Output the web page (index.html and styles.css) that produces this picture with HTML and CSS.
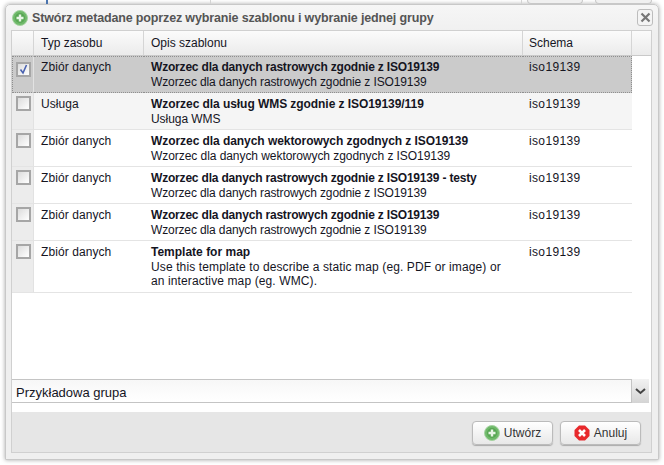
FILE: index.html
```html
<!DOCTYPE html>
<html lang="pl">
<head>
  <meta charset="UTF-8">
  <title>Stwórz metadane</title>
  <link rel="stylesheet" href="styles.css">
</head>
<body>
  <div class="top-strip">
    <span class="strip-line blue"></span>
    <span class="strip-line gray"></span>
    <span class="strip-line gray last"></span>
    <span class="strip-tab"></span>
    <span class="strip-tab"></span>
  </div>
  <div class="window">
    <div class="window-title">
      <svg class="icon-add" width="16" height="16" viewBox="0 0 16 16">
        <circle cx="8" cy="8" r="7.5" fill="#6fb96a" stroke="#a5d3a0"/>
        <circle cx="8" cy="8" r="5" fill="#58a653"/>
        <path d="M8 4.500v7M4.500 8h7" stroke="#e8f5e6" stroke-width="2.400"/>
      </svg>
      <span class="title-text">Stwórz metadane poprzez wybranie szablonu i wybranie jednej grupy</span>
      <button class="close-btn" type="button">
        <svg width="11" height="11" viewBox="0 0 11 11">
          <path d="M1.500 1.500l8 8M9.500 1.500l-8 8" stroke="#777" stroke-width="2.200"/>
        </svg>
      </button>
    </div>
    <div class="window-body">
      <div class="grid-area">
        <table class="grid">
          <colgroup>
            <col class="col-check">
            <col class="col-type">
            <col class="col-desc">
            <col class="col-schema">
            <col class="col-end">
          </colgroup>
          <thead>
            <tr>
              <th></th>
              <th>Typ zasobu</th>
              <th>Opis szablonu</th>
              <th class="schema-head">Schema</th>
              <th class="end-head"></th>
            </tr>
          </thead>
          <tbody>
            <tr class="selected">
              <td class="check-cell"><span class="check"><svg width="11" height="11" viewBox="0 0 11 11"><path d="M2.500 5.500l2.500 3.500l3.500-8" fill="none" stroke="#4a62b0" stroke-width="1.600"/></svg></span></td>
              <td class="type">Zbiór danych</td>
              <td class="raster"><b>Wzorzec dla danych rastrowych zgodnie z ISO19139</b><br>Wzorzec dla danych rastrowych zgodnie z ISO19139</td>
              <td class="schema">iso19139</td>
            </tr>
            <tr class="alt">
              <td class="check-cell"><span class="check"></span></td>
              <td class="type">Usługa</td>
              <td class="vector"><b>Wzorzec dla usług WMS zgodnie z ISO19139/119</b><br>Usługa WMS</td>
              <td class="schema">iso19139</td>
            </tr>
            <tr>
              <td class="check-cell"><span class="check"></span></td>
              <td class="type">Zbiór danych</td>
              <td class="vector"><b>Wzorzec dla danych wektorowych zgodnych z ISO19139</b><br>Wzorzec dla danych wektorowych zgodnych z ISO19139</td>
              <td class="schema">iso19139</td>
            </tr>
            <tr>
              <td class="check-cell"><span class="check"></span></td>
              <td class="type">Zbiór danych</td>
              <td class="raster"><b>Wzorzec dla danych rastrowych zgodnie z ISO19139 - testy</b><br>Wzorzec dla danych rastrowych zgodnie z ISO19139</td>
              <td class="schema">iso19139</td>
            </tr>
            <tr>
              <td class="check-cell"><span class="check"></span></td>
              <td class="type">Zbiór danych</td>
              <td class="raster"><b>Wzorzec dla danych rastrowych zgodnie z ISO19139</b><br>Wzorzec dla danych rastrowych zgodnie z ISO19139</td>
              <td class="schema">iso19139</td>
            </tr>
            <tr class="tall">
              <td class="check-cell"><span class="check"></span></td>
              <td class="type">Zbiór danych</td>
              <td class="wide"><b>Template for map</b><br>Use this template to describe a static map (eg. PDF or image) or<br>an interactive map (eg. WMC).</td>
              <td class="schema">iso19139</td>
            </tr>
          </tbody>
        </table>
      </div>
      <div class="combo">
        <span class="combo-text">Przykładowa grupa</span>
        <span class="combo-arrow">
          <svg width="11" height="7" viewBox="0 0 11 7"><path d="M1 1l4.500 4l4.500-4" fill="none" stroke="#444" stroke-width="2"/></svg>
        </span>
      </div>
      <div class="footer">
        <button class="btn" type="button">
          <svg width="16" height="16" viewBox="0 0 16 16">
            <circle cx="8" cy="8" r="7.500" fill="#6fb96a" stroke="#a5d3a0"/>
            <circle cx="8" cy="8" r="5" fill="#58a653"/>
            <path d="M8 4.500v7M4.500 8h7" stroke="#e8f5e6" stroke-width="2.400"/>
          </svg>
          Utwórz
        </button>
        <button class="btn" type="button">
          <svg width="16" height="16" viewBox="0 0 16 16">
            <path d="M5 .5h6l4.500 4.500v6l-4.500 4.500h-6l-4.500-4.500v-6z" fill="#e8292c"/>
            <path d="M5 5l6 6M11 5l-6 6" stroke="#fff" stroke-width="2.600"/>
          </svg>
          Anuluj
        </button>
      </div>
    </div>
  </div>
</body>
</html>
```

FILE: styles.css
```css
html, body {
  margin: 0;
  padding: 0;
}
body {
  width: 664px;
  height: 465px;
  overflow: hidden;
  background-color: #fff;
  font-family: "Liberation Sans", Arial, sans-serif;
  font-size: 12px;
  color: #15151f;
}
.top-strip {
  display: flex;
  height: 4px;
  padding-left: 46px;
}
.strip-line {
  width: 1px;
  margin-right: 162px;
}
.strip-line.blue {
  width: 2px;
  background-color: #4a74ae;
}
.strip-line.gray {
  background-color: #d4d4d4;
}
.strip-line.last {
  margin-right: 5px;
}
.strip-line.gray + .strip-line.last {
  margin-left: 148px;
}
.strip-tab {
  width: 63px;
  margin-right: 12px;
  box-sizing: border-box;
  border: 1px solid #c8c8c8;
  border-top: none;
  border-radius: 0 0 4px 4px;
  background-color: #f0f0f0;
}
.window {
  width: 654px;
  height: 456px;
  margin-left: 5px;
  box-sizing: border-box;
  border: 1px solid #c8c8c8;
  border-radius: 5px 5px 0 0;
  background: linear-gradient(#f6f6f6, #efefef 30px);
  box-shadow: 0 0 4px rgba(0, 0, 0, 0.35);
  padding: 0 6px 6px 5px;
  display: flex;
  flex-direction: column;
}
.window-title {
  height: 25px;
  padding-left: 1px;
  display: flex;
  align-items: center;
  gap: 4px;
  font-weight: bold;
  font-size: 12.500px;
  letter-spacing: -0.15px;
  color: #555;
}
.title-text {
  flex: 1;
}
.close-btn {
  width: 16px;
  height: 17px;
  margin-right: -1px;
  padding: 0;
  display: flex;
  align-items: center;
  justify-content: center;
  border: 1px solid #bdbdbd;
  border-radius: 3px;
  background-color: #f4f4f4;
}
.window-body {
  flex: 1;
  background-color: #fff;
  border: 1px solid #d0d0d0;
  display: flex;
  flex-direction: column;
}
.grid-area {
  height: 348px;
}
.grid {
  width: 639px;
  border-collapse: separate;
  border-spacing: 0;
  table-layout: fixed;
}
.col-check { width: 22px; }
.col-type { width: 110px; }
.col-desc { width: 379px; }
.col-schema { width: 109px; }
.col-end { width: 19px; }
.grid th {
  height: 25px;
  padding: 0 7px;
  box-sizing: border-box;
  text-align: left;
  font-weight: normal;
  background: linear-gradient(#fbfbfb, #ebebeb);
  border-right: 1px solid #d5d5d5;
  border-bottom: 1px solid #c9c9c9;
}
.grid .schema-head {
  padding-left: 6px;
}
.grid .end-head {
  border-right: none;
}
.grid td {
  height: 37px;
  box-sizing: border-box;
  padding: 4px 7px 0;
  line-height: 14.500px;
  vertical-align: top;
  border-bottom: 1px solid #e4e4e4;
}
.grid .tall td {
  height: 52px;
}
.grid .check-cell {
  padding: 3px 0 0 4px;
  background-color: #ececec;
  border-right: 1px solid #e2e2e2;
}
.grid .type {
  letter-spacing: 0.08px;
}
.grid .schema {
  padding-left: 6px;
  letter-spacing: 0.35px;
}
.raster {
  letter-spacing: -0.125px;
}
.raster b {
  letter-spacing: -0.19px;
}
.vector {
  letter-spacing: -0.06px;
}
.wide {
  letter-spacing: 0.12px;
}
.wide b {
  letter-spacing: 0;
}
.grid .selected td {
  padding-top: 3px;
  background-color: #cbcbcb;
  border-top: 1px dotted #8f8f8f;
  border-bottom: 1px dotted #8f8f8f;
}
.grid .selected .check-cell {
  padding-top: 5px;
  border-left: 1px dotted #8f8f8f;
  padding-left: 3px;
}
.grid .selected .schema {
  border-right: 1px dotted #8f8f8f;
}
.alt td {
  background-color: #f5f5f5;
}
.check {
  display: flex;
  align-items: center;
  justify-content: center;
  box-sizing: border-box;
  width: 15px;
  height: 15px;
  border: 2px solid #a6a6a6;
  background: linear-gradient(135deg, #dcdcdc, #fff);
}
.combo {
  height: 24px;
  margin-right: 2px;
  box-sizing: border-box;
  display: flex;
  align-items: center;
  border-top: 1px solid #c4c4c4;
  border-bottom: 1px solid #c4c4c4;
  background: linear-gradient(#f7f7f7, #fff);
  font-size: 13px;
  padding-left: 4px;
  padding-top: 2px;
}
.combo-text {
  flex: 1;
}
.combo-arrow {
  width: 17px;
  height: 24px;
  margin-top: -3px;
  margin-bottom: -1px;
  display: flex;
  align-items: center;
  justify-content: center;
  background: linear-gradient(#f2f2f2, #d4d4d4);
  border-left: 1px solid #c4c4c4;
}
.footer {
  margin-top: 9px;
  flex: 1;
  background-color: #e6e6e6;
  display: flex;
  justify-content: flex-end;
  align-items: flex-start;
  gap: 7px;
  padding: 9px 10px 0 0;
}
.btn {
  width: 81px;
  height: 24px;
  padding: 0;
  display: flex;
  align-items: center;
  justify-content: center;
  gap: 4px;
  font-family: inherit;
  font-size: 12px;
  color: #333;
  border: 1px solid #bbb;
  border-radius: 4px;
  background: linear-gradient(#fff, #e8e8e8);
  box-shadow: 0 1px 1px #aaa;
}
```
